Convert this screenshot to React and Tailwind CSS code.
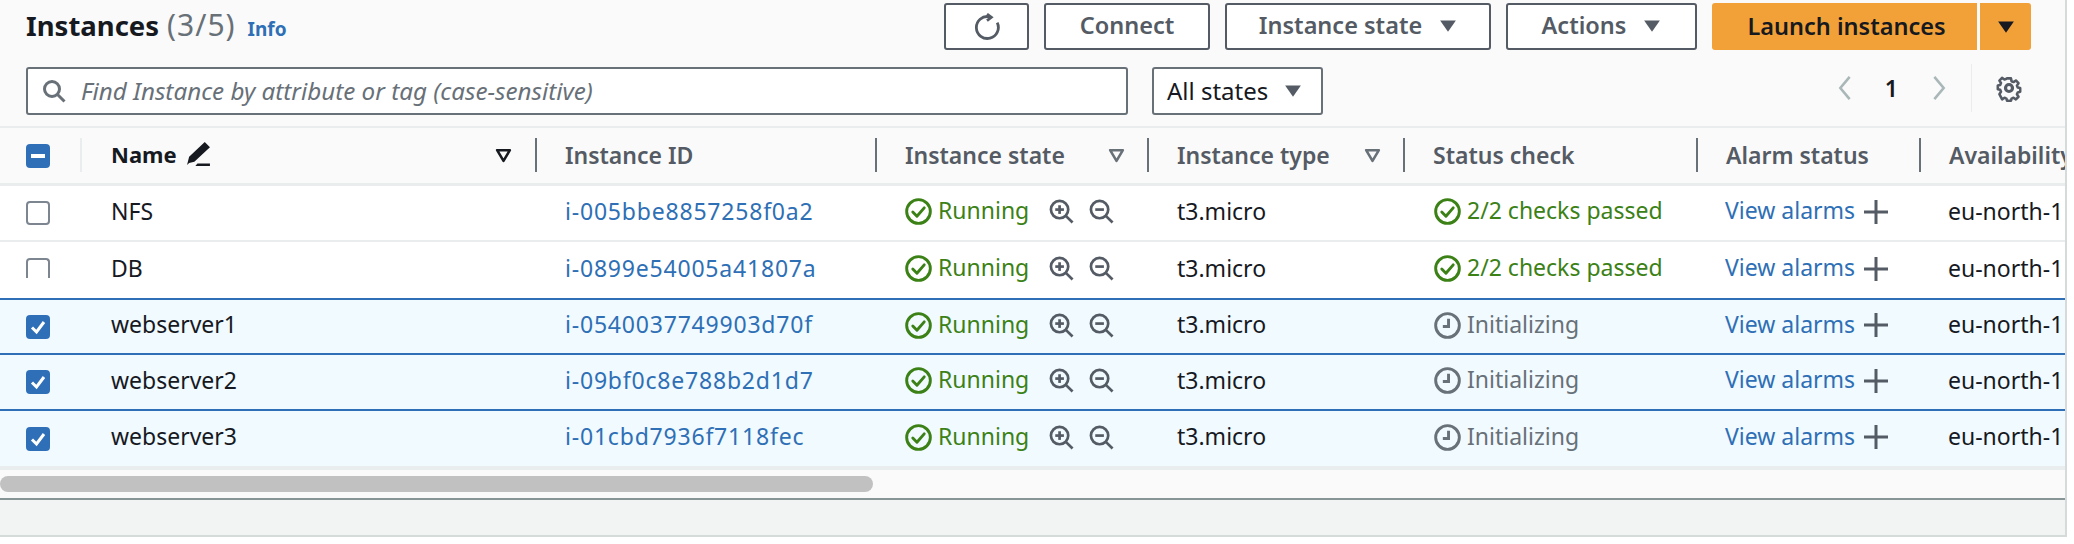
const rows = [
  { name: "NFS", id: "i-005bbe8857258f0a2", ok: true, box: "h-[56px] bg-white border-b-[2px] border-[#eaeded]" },
  { name: "DB", id: "i-0899e54005a41807a", ok: true, clipped: true, box: "h-[58px] bg-white border-b-[2px] border-[#2f6fb7]" },
  { name: "webserver1", id: "i-0540037749903d70f", selected: true, box: "h-[55px] bg-[#f1faff] border-b-[2px] border-[#2f6fb7]" },
  { name: "webserver2", id: "i-09bf0c8e788b2d1d7", selected: true, box: "h-[56px] bg-[#f1faff] border-b-[2px] border-[#2f6fb7]" },
  { name: "webserver3", id: "i-01cbd7936f7118fec", selected: true, box: "h-[55px] bg-[#f1faff]" },
];

const cols = "grid grid-cols-[82px_455px_340px_272px_256px_293px_223px_300px]";

const Caret = ({ className }) => (
  <svg viewBox="0 0 16 12" className={className}>
    <path d="M1 1h14L8 11z" fill="currentColor" />
  </svg>
);

const FilterTri = ({ className }) => (
  <svg viewBox="0 0 16 14" className={className} fill="none" stroke="currentColor" strokeWidth="2.4">
    <path d="M2 2h12L8 12z" strokeLinejoin="round" />
  </svg>
);

const CheckCircle = () => (
  <svg viewBox="0 0 26 26" className="w-[27px] h-[27px] shrink-0" fill="none" stroke="#3b8116" strokeWidth="2.8">
    <circle cx="13" cy="13" r="11.4" />
    <path d="M7.5 13.5l4 4 7-8" strokeLinecap="round" strokeLinejoin="round" />
  </svg>
);

const Clock = () => (
  <svg viewBox="0 0 26 26" className="w-[27px] h-[27px] shrink-0" fill="none" stroke="#687078" strokeWidth="2.8">
    <circle cx="13" cy="13" r="11.4" />
    <path d="M14 6.5v7.5H8.5" />
  </svg>
);

const Zoom = ({ plus }) => (
  <svg viewBox="0 0 26 26" className="w-[25px] h-[25px]" fill="none" stroke="#545b64" strokeWidth="2.8">
    <circle cx="11" cy="11" r="9" />
    <path d="M17.5 17.5l7 7" />
    <path d="M6.5 11h9" />
    {plus && <path d="M11 6.5v9" />}
  </svg>
);

const Checkbox = ({ checked, clipped }) => {
  if (checked) {
    return (
      <span className="w-[24px] h-[24px] rounded-[4px] bg-[#2f6fb7] flex items-center justify-center">
        <svg viewBox="0 0 24 24" className="w-[24px] h-[24px]" fill="none" stroke="white" strokeWidth="3">
          <path d="M6 12.5l4.5 4.5L18 7" />
        </svg>
      </span>
    );
  }
  if (clipped) {
    return <span className="w-[24px] h-[20px] mb-[4px] rounded-t-[4px] border-2 border-b-0 border-[#7d8590] bg-white" />;
  }
  return <span className="w-[24px] h-[24px] rounded-[4px] border-2 border-[#7d8590] bg-white" />;
};

const Button = ({ label, width, caret }) => (
  <button className={`h-[47px] ${width} rounded-[3px] border-2 border-[#545b64] bg-white flex items-center justify-center gap-[17px] text-[#545b64] font-semibold text-[23.5px] pb-[4px]`}>
    {label}
    {caret && <Caret className="w-[18px] h-[14px] text-[#545b64] mt-[3px]" />}
  </button>
);

const HeadCell = ({ label, filter, divider = true }) => (
  <div className="relative flex items-center justify-between pl-[28px] pr-[24px] text-[#545b64] font-semibold text-[23px]">
    <span className="whitespace-nowrap pb-[1px]">{label}</span>
    {filter && <FilterTri className="w-[17px] h-[15px] text-[#687078]" />}
    {divider && <span className="absolute right-0 top-[10px] h-[34px] w-[2px] bg-[#687078]" />}
  </div>
);

const Row = ({ row }) => (
  <div className={`${cols} ${row.box} items-center`}>
    <div className="pl-[26px] flex items-center">
      <Checkbox checked={row.selected} clipped={row.clipped} />
    </div>
    <div className="pl-[29px] pb-[5px] text-[#16191f]">{row.name}</div>
    <div className="pl-[28px] pb-[5px] text-[#2e6fb5] tracking-[0.8px]">{row.id}</div>
    <div className="pl-[28px] pb-[3px] flex items-center">
      <CheckCircle />
      <span className="ml-[6px] w-[111px] pb-[3px] text-[#3b8116]">Running</span>
      <span className="flex gap-[15px]"><Zoom plus /><Zoom /></span>
    </div>
    <div className="pl-[28px] pb-[5px] text-[#16191f]">t3.micro</div>
    <div className="pl-[29px] pb-[3px] flex items-center gap-[6px]">
      {row.ok ? <CheckCircle /> : <Clock />}
      <span className={`pb-[3px] ${row.ok ? "text-[#3b8116]" : "text-[#687078]"}`}>{row.ok ? "2/2 checks passed" : "Initializing"}</span>
    </div>
    <div className="pl-[27px] pb-[3px] flex items-center gap-[9px] text-[#2e6fb5]">
      <span className="pb-[3px]">View alarms</span>
      <svg viewBox="0 0 24 24" className="w-[24px] h-[24px]" fill="none" stroke="#545b64" strokeWidth="3">
        <path d="M12 0v24M0 12h24" />
      </svg>
    </div>
    <div className="pl-[27px] pb-[5px] text-[#16191f] whitespace-nowrap">eu-north-1</div>
  </div>
);

export default function App() {
  return (
    <div className="w-[2074px] h-[544px] bg-white overflow-hidden font-['Noto_Sans',sans-serif] text-[23px] leading-[28px]">
      <div className="w-[2067px] h-[537px] bg-[#fafafa] overflow-hidden border-b-[2px] border-r-[2px] border-[#d5dbdb] flex flex-col">
        {/* top bar */}
        <div className="flex items-start pl-[26px] pr-[34px] pt-[3px] h-[67px] shrink-0">
          <div className="flex items-baseline pt-[8px]">
            <h1 className="text-[27.500px] font-bold text-[#16191f]">Instances</h1>
            <span className="ml-[8px] text-[30px] tracking-[1px] text-[#687078]">(3/5)</span>
            <span className="ml-[12px] text-[19px] font-bold text-[#2e6fb5]">Info</span>
          </div>
          <div className="ml-auto flex items-center gap-[15px]">
            <button className="h-[47px] w-[85px] rounded-[3px] border-2 border-[#545b64] bg-white flex items-center justify-center">
              <svg viewBox="0 0 26 26" className="w-[28px] h-[28px]" fill="none" stroke="#545b64" strokeWidth="2.6">
                <path d="M15 3.4A10.2 10.2 0 1 0 22.5 9" />
                <path d="M13 1l4 3-4 3" />
              </svg>
            </button>
            <Button label="Connect" width="w-[166px]" />
            <Button label="Instance state" width="w-[266px]" caret />
            <Button label="Actions" width="w-[191px]" caret />
            <div className="flex h-[47px] gap-[3px]">
              <button className="w-[265px] rounded-l-[3px] bg-[#f2a138] text-[#16191f] font-semibold text-[23.5px] pb-[2px] pl-[4px]">Launch instances</button>
              <button className="w-[51px] rounded-r-[3px] bg-[#f2a138] flex items-center justify-center">
                <Caret className="w-[18px] h-[14px] text-[#16191f]" />
              </button>
            </div>
          </div>
        </div>

        {/* filter bar */}
        <div className="flex items-center pl-[26px] h-[48px] shrink-0">
          <div className="w-[1102px] h-[48px] rounded-[3px] border-2 border-[#687078] bg-white flex items-center pl-[14px] gap-[15px] text-[24.2px]">
            <svg viewBox="0 0 24 24" className="w-[24px] h-[24px]" fill="none" stroke="#687078" strokeWidth="3">
              <circle cx="10" cy="10" r="7.5" />
              <path d="M15.5 15.5l7 7" />
            </svg>
            <span className="italic text-[#687078]">Find Instance by attribute or tag (case-sensitive)</span>
          </div>
          <div className="ml-[24px] w-[171px] h-[48px] rounded-[3px] border-2 border-[#687078] bg-white flex items-center pl-[13px] gap-[16px] text-[#16191f] text-[24px]">
            All states
            <Caret className="w-[18px] h-[14px] text-[#545b64]" />
          </div>
          <div className="ml-auto flex items-center h-[48px] -mt-[7px]">
            <svg viewBox="0 0 14 28" className="w-[14px] h-[26px]" fill="none" stroke="#aab7b8" strokeWidth="2.8"><path d="M12 2L2 14l10 12" /></svg>
            <span className="ml-[33px] font-semibold text-[#16191f]">1</span>
            <svg viewBox="0 0 14 28" className="ml-[34px] w-[14px] h-[26px]" fill="none" stroke="#aab7b8" strokeWidth="2.8"><path d="M2 2l10 12L2 26" /></svg>
            <span className="ml-[25px] w-[1px] h-[48px] bg-[#eaeded]" />
            <svg viewBox="0 0 28 28" className="ml-[23px] mr-[42px] w-[28px] h-[28px]" fill="none" stroke="#545b64" strokeWidth="3.2" strokeLinejoin="round">
              <path d="M11.5 2h5l.7 3.6 2.400 1 3-2 3.300 3.400-2 3 1 2.400 3.100.6v4.800l-3.100.7-1 2.400 2 3-3.300 3.300-3-2-2.400 1-.7 2.700h-5l-.7-2.700-2.400-1-3 2L2 21.700l2-3-1-2.400L0 15.600v-4.800l3-.6 1-2.400-2-3L5.300 1.400l3 2 2.500-1z" transform="translate(2.800 2.800) scale(.8)" />
              <circle cx="14" cy="14" r="3.500" />
            </svg>
          </div>
        </div>

        {/* table */}
        <div className="mt-[11px] border-t-[2px] border-[#eaeded] shrink-0">
          <div className={`${cols} h-[58px] border-b-[3px] border-[#eaeded] bg-[#fafafa]`}>
            <div className="relative pl-[26px] flex items-center">
              <span className="w-[24px] h-[24px] rounded-[4px] bg-[#2f6fb7] flex items-center justify-center">
                <span className="w-[14px] h-[4px] bg-white" />
              </span>
              <span className="absolute right-0 top-[10px] h-[34px] w-[2px] bg-[#eaeded]" />
            </div>
            <div className="relative flex items-center pl-[29px] pr-[25px] font-bold text-[#16191f] text-[22px]">
              <span className="pb-[4px]">Name</span>
              <svg viewBox="0 0 24 24" className="ml-[9px] mb-[4px] w-[25px] h-[25px]" fill="#16191f">
                <path d="M18 1l5 5L8 20l-5 1-2 2 2-8z" />
                <path d="M11 21.500h12v2.500H9z" />
              </svg>
              <FilterTri className="ml-auto w-[17px] h-[15px] text-[#16191f]" />
              <span className="absolute right-0 top-[10px] h-[34px] w-[2px] bg-[#687078]" />
            </div>
            <HeadCell label="Instance ID" />
            <HeadCell label="Instance state" filter />
            <HeadCell label="Instance type" filter />
            <HeadCell label="Status check" />
            <HeadCell label="Alarm status" />
            <HeadCell label="Availability" divider={false} />
          </div>
          {rows.map((row) => <Row key={row.name} row={row} />)}
        </div>

        {/* scrollbar */}
        <div className="h-[32px] shrink-0 border-t-[4px] border-[#eaeded] bg-[#fafafa] pt-[6px]">
          <div className="w-[873px] h-[16px] rounded-full bg-[#c1c1c1]" />
        </div>
        <div className="flex-1 bg-[#f2f3f3] border-t-[2px] border-[#879596]" />
      </div>
    </div>
  );
}
